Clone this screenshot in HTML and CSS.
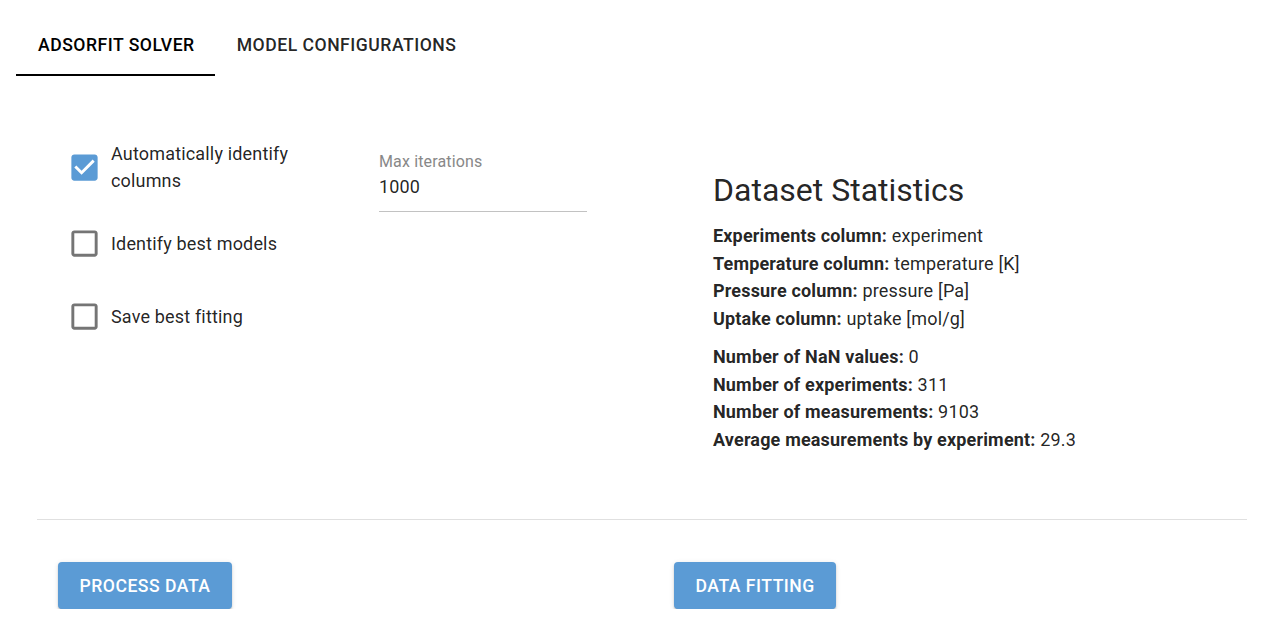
FILE: index.html
```html
<!DOCTYPE html>
<html lang="en">
<head>
<meta charset="utf-8">
<title>AdsorFit</title>
<link rel="stylesheet" href="styles.css">
</head>
<body>
<nav class="tabs">
  <div class="tab tab-active">Adsorfit Solver</div>
  <div class="tab">Model Configurations</div>
</nav>
<main class="panel">
  <section class="options">
    <div class="checks">
      <label class="check-row">
        <span class="check-box">
          <svg class="check-icon checked" viewBox="0 0 24 24"><path d="M19 3H5c-1.11 0-2 .9-2 2v14c0 1.1.89 2 2 2h14c1.11 0 2-.9 2-2V5c0-1.1-.89-2-2-2zm-9 14l-5-5 1.41-1.41L10 14.17l7.590-7.59L19 8l-9 9z"/></svg>
        </span>
        <span class="check-label">Automatically identify columns</span>
      </label>
      <label class="check-row row-2">
        <span class="check-box">
          <svg class="check-icon" viewBox="0 0 24 24"><path d="M19 5v14H5V5h14m0-2H5c-1.1 0-2 .9-2 2v14c0 1.1.9 2 2 2h14c1.1 0 2-.9 2-2V5c0-1.1-.9-2-2-2z"/></svg>
        </span>
        <span class="check-label">Identify best models</span>
      </label>
      <label class="check-row row-3">
        <span class="check-box">
          <svg class="check-icon" viewBox="0 0 24 24"><path d="M19 5v14H5V5h14m0-2H5c-1.1 0-2 .9-2 2v14c0 1.1.9 2 2 2h14c1.1 0 2-.9 2-2V5c0-1.1-.9-2-2-2z"/></svg>
        </span>
        <span class="check-label">Save best fitting</span>
      </label>
    </div>
    <div class="field">
      <div class="field-label">Max iterations</div>
      <div class="field-input">1000</div>
    </div>
    <div class="stats">
      <h2 class="stats-title">Dataset Statistics</h2>
      <div class="stats-group">
        <div><b>Experiments column:</b> experiment</div>
        <div><b>Temperature column:</b> temperature [K]</div>
        <div><b>Pressure column:</b> pressure [Pa]</div>
        <div><b>Uptake column:</b> uptake [mol/g]</div>
      </div>
      <div class="stats-group stats-group-2">
        <div><b>Number of NaN values:</b> 0</div>
        <div><b>Number of experiments:</b> 311</div>
        <div><b>Number of measurements:</b> 9103</div>
        <div><b>Average measurements by experiment:</b> 29.3</div>
      </div>
    </div>
  </section>
  <hr class="divider">
  <section class="actions">
    <button class="btn">Process Data</button>
    <button class="btn">Data Fitting</button>
  </section>
</main>
</body>
</html>
```

FILE: styles.css
```css
* { box-sizing: border-box; }
body {
  margin: 0;
  font-family: Roboto, "Liberation Sans", sans-serif;
  color: rgba(0, 0, 0, 0.87);
  background: #fff;
}
.tabs {
  display: flex;
  padding: 16px 0 0 16px;
}
.tab {
  height: 60px;
  padding: 0 21px 0 22px;
  display: flex;
  align-items: center;
  font-size: 17.6px;
  font-weight: 500;
  letter-spacing: 0.02857em;
  text-transform: uppercase;
  color: rgba(0, 0, 0, 0.87);
  border-bottom: 2px solid transparent;
}
.tab-active {
  color: #000;
  padding: 0 20px 0 22px;
  border-bottom-color: #000;
}
.panel {
  padding-top: 64px;
}
.options {
  display: grid;
  grid-template-columns: 321px 334px 1fr;
  padding-left: 58px;
  height: 379px;
}
.checks {
  display: flex;
  flex-direction: column;
  padding-right: 40px;
}
.check-row {
  display: flex;
  align-items: center;
}
.row-2 { margin-top: 23px; }
.row-3 { margin-top: 20px; }
.check-box {
  flex: none;
  width: 53px;
  height: 53px;
  padding: 9px;
  display: flex;
}
.check-icon {
  width: 35px;
  height: 35px;
  fill: #757575;
}
.check-icon.checked { fill: #5b9bd5; }
.check-label {
  font-size: 18px;
  line-height: 27px;
  letter-spacing: 0.00938em;
}
.field {
  width: 208px;
  padding-top: 14px;
}
.field-label {
  font-size: 16px;
  line-height: 16px;
  letter-spacing: 0.00938em;
  color: #888;
}
.field-input {
  margin-top: 3px;
  font-size: 18px;
  line-height: 27px;
  letter-spacing: 0.00938em;
  padding-bottom: 11px;
  border-bottom: 1px solid #c2c2c2;
}
.stats {
  padding-top: 30px;
  font-size: 18px;
  line-height: 27.5px;
  letter-spacing: 0.00938em;
}
.stats-title {
  margin: 0 0 12px;
  font-size: 32px;
  font-weight: 400;
  line-height: 40px;
  letter-spacing: 0;
}
.stats-group-2 { margin-top: 11px; }
.stats b { font-weight: 700; }
.divider {
  margin: 0 33px 0 37px;
  border: 0;
  border-top: 1px solid #e0e0e0;
}
.actions {
  display: grid;
  grid-template-columns: 616px auto;
  justify-items: start;
  padding: 42px 0 0 58px;
}
.btn {
  height: 47px;
  padding: 0 21px 0 21.5px;
  border: 0;
  border-radius: 4px;
  background: #5b9bd5;
  color: #fff;
  font-family: inherit;
  font-size: 17.6px;
  font-weight: 500;
  letter-spacing: 0.02857em;
  text-transform: uppercase;
  box-shadow: 0 3px 1px -2px rgba(0,0,0,0.2), 0 2px 2px 0 rgba(0,0,0,0.14), 0 1px 5px 0 rgba(0,0,0,0.12);
}
```
